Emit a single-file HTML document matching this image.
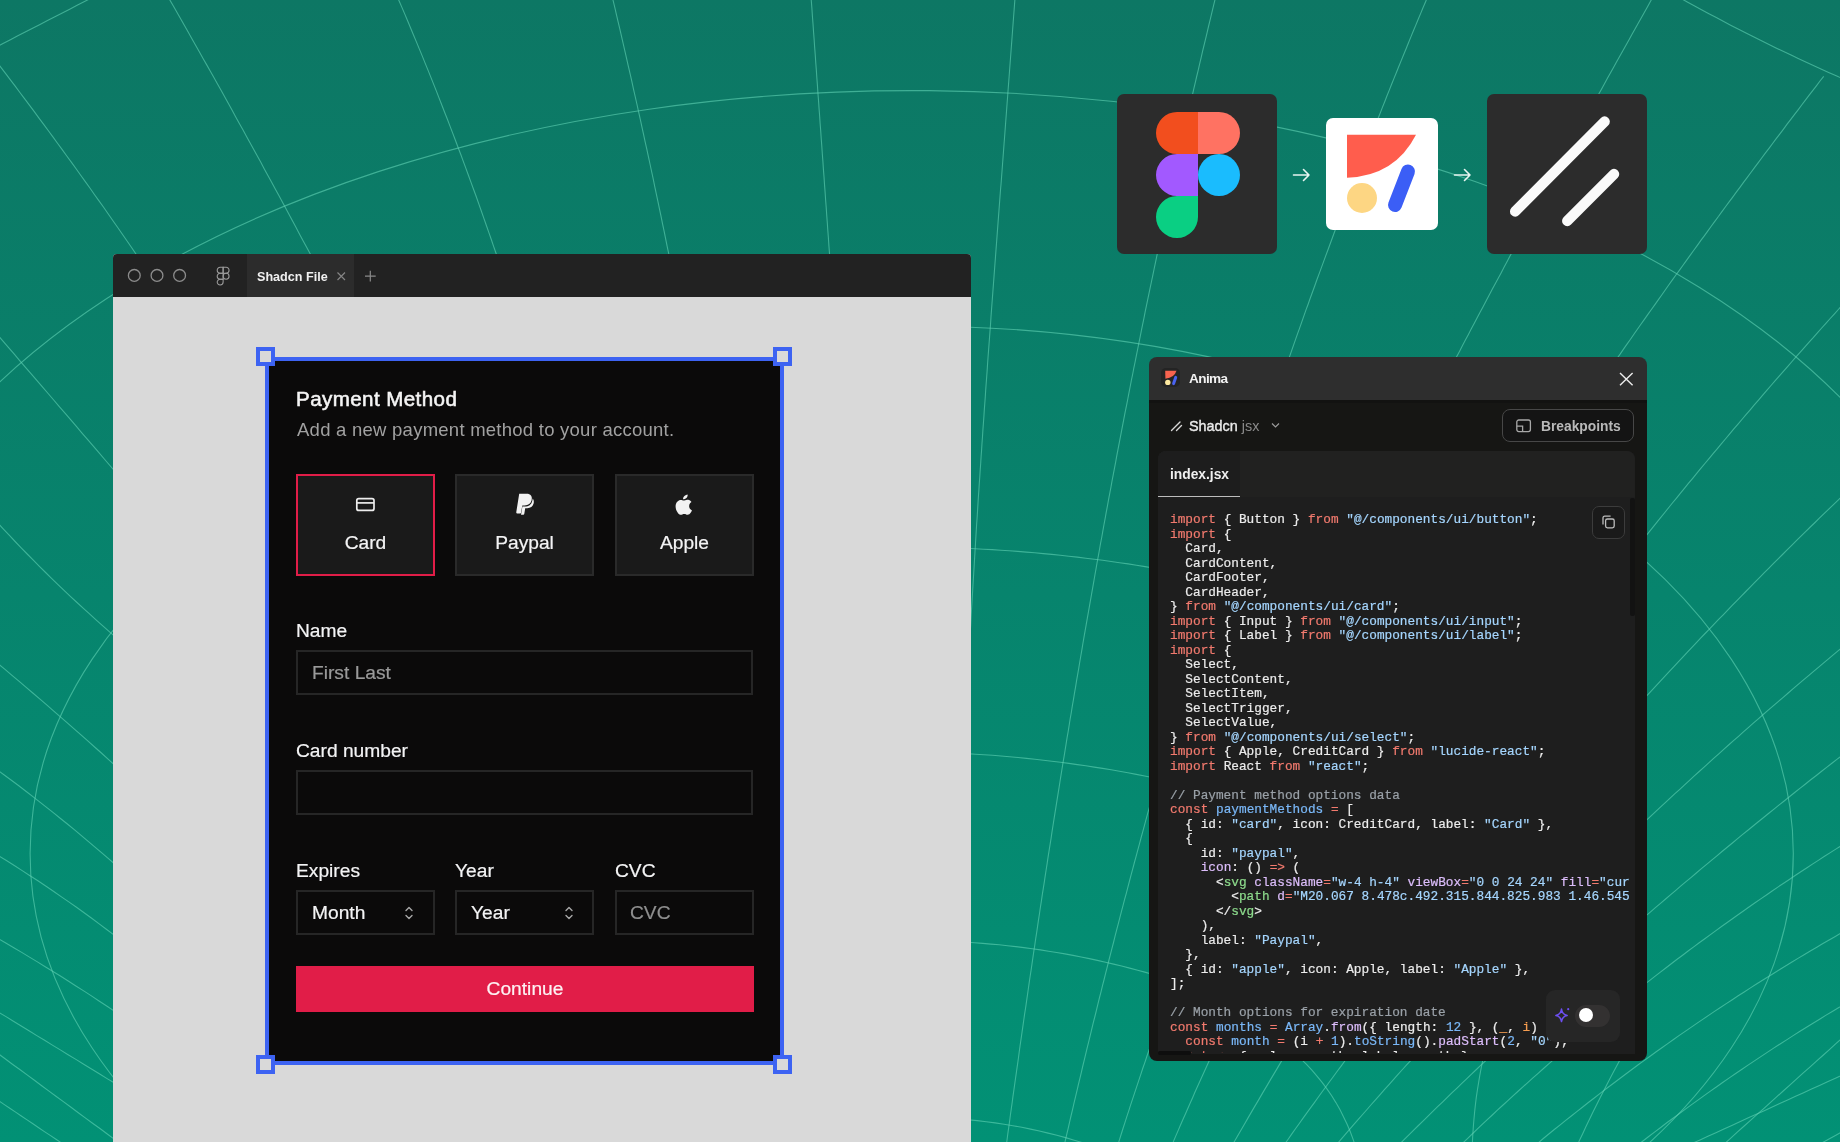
<!DOCTYPE html>
<html><head><meta charset="utf-8">
<style>
*{margin:0;padding:0;box-sizing:border-box}
html,body{width:1840px;height:1142px;overflow:hidden}
body{position:relative;-webkit-font-smoothing:antialiased;font-family:"Liberation Sans",sans-serif;background:linear-gradient(180deg,#0d7764 0%,#07846d 52%,#029175 100%)}
.abs{position:absolute;will-change:transform}
#grid{position:absolute;left:0;top:0}
/* browser */
#browser{left:113px;top:254px;width:858px;height:888px;background:#d9d9d9;border-radius:4px 4px 0 0;overflow:hidden}
#titlebar{left:0;top:0;width:858px;height:43px;background:#222222}
.dot{width:13px;height:13px;border:1.3px solid #8a8a8a;border-radius:50%;top:15px}
#tab{left:134px;top:0;width:107px;height:43px;background:#2c2c2c}
/* card */
#sel{left:265px;top:357px;width:519px;height:708px;border:4px solid #3d63f2;background:#0b0a0a}
.handle{width:19px;height:19px;border:4px solid #3d63f2;background:#d9d9d9}
.opt{width:139px;height:102px;background:#1a1a1a;border:2px solid #2a2a2a}
.opt.on{border-color:#e11d48}
.lbl{color:#f4f4f5;font-size:19.2px;white-space:nowrap;-webkit-text-stroke:0.2px currentColor}
.inp{width:457px;height:45px;border:2px solid #262626;background:#0b0a0a}
/* logos */
.lbox{width:160px;height:160px;background:#2c2c2c;border-radius:7px}
/* panel */
#panel{left:1149px;top:357px;width:498px;height:704px;background:#161614;border-radius:8px;overflow:hidden}
#phead{left:0;top:0;width:498px;height:43px;background:#2e2e2e;border-bottom:3px solid #121211;height:46px}
#code{font-family:"Liberation Mono",monospace;font-size:12.78px;line-height:14.5px;white-space:pre;color:#ececec;-webkit-text-stroke:0.2px currentColor}
.k{color:#f27a6e}.s{color:#a5d6ff}.c{color:#9aa1a8}.b{color:#7ab8f8}.p{color:#dcbdfb}.g{color:#8ddb8c}.o{color:#f69d50}
</style></head><body>

<svg id="grid" width="1840" height="1142" viewBox="0 0 1840 1142"><g fill="none" stroke="#62d3b6" stroke-opacity="0.6" stroke-width="1.1"><path d="M-26.7 58.7 L-19.3 54.9 L-11.9 51.1 L-4.4 47.3 L3.0 43.5 L10.4 39.7 L17.8 35.8 L25.2 32.0 L32.6 28.2 L40.0 24.4 L47.5 20.6 L54.9 16.8 L62.3 13.0 L69.7 9.2 L77.1 5.3 L84.5 1.5 L91.9 -2.3 L99.4 -6.1 L106.8 -9.9 L114.2 -13.7"/><path d="M-18.3 42.2 L-13.5 48.5 L-8.7 54.8 L-3.9 61.0 L0.9 67.3 L5.7 73.6 L10.4 79.9 L15.2 86.2 L19.9 92.5 L24.7 98.8 L29.4 105.1 L34.1 111.4 L38.8 117.8 L43.5 124.1 L48.2 130.5 L52.9 136.8 L57.5 143.2 L62.2 149.6 L66.8 156.0 L71.5 162.4 L76.1 168.8 L80.7 175.2 L85.3 181.6 L89.9 188.0 L94.4 194.5 L99.0 200.9 L103.6 207.3 L108.1 213.8 L112.6 220.3 L117.2 226.7 L121.7 233.2 L126.2 239.7 L130.7 246.2 L135.1 252.7 L139.6 259.2 L144.1 265.7 L148.5 272.2 L152.9 278.8"/><path d="M154.9 -25.9 L158.6 -19.5 L162.4 -13.0 L166.1 -6.6 L169.8 -0.1 L173.5 6.3 L177.2 12.8 L180.9 19.3 L184.6 25.8 L188.3 32.2 L191.9 38.7 L195.6 45.2 L199.3 51.7 L202.9 58.2 L206.6 64.6 L210.2 71.1 L213.9 77.6 L217.5 84.1 L221.2 90.6 L224.8 97.1 L228.4 103.6 L232.0 110.1 L235.6 116.7 L239.2 123.2 L242.9 129.7 L246.4 136.2 L250.0 142.7 L253.6 149.3 L257.2 155.8 L260.8 162.3 L264.3 168.9 L267.9 175.4 L271.5 181.9 L275.0 188.5 L278.6 195.0 L282.1 201.6 L285.6 208.1 L289.2 214.7 L292.7 221.3 L296.2 227.8 L299.7 234.4 L303.2 241.0 L306.8 247.5 L310.3 254.1 L313.7 260.7 L317.2 267.3 L320.7 273.8 L324.2 280.4"/><path d="M386.8 -27.5 L389.8 -20.6 L392.8 -13.7 L395.8 -6.8 L398.8 0.2 L401.8 7.1 L404.8 14.1 L407.7 21.0 L410.6 28.0 L413.5 35.0 L416.4 41.9 L419.3 48.9 L422.2 55.9 L425.0 62.9 L427.9 69.9 L430.7 76.9 L433.5 83.9 L436.3 90.9 L439.0 97.9 L441.8 105.0 L444.5 112.0 L447.3 119.0 L450.0 126.1 L452.7 133.1 L455.4 140.2 L458.0 147.2 L460.7 154.3 L463.3 161.4 L465.9 168.4 L468.5 175.5 L471.1 182.6 L473.7 189.7 L476.3 196.8 L478.8 203.9 L481.3 211.0 L483.8 218.1 L486.3 225.3 L488.8 232.4 L491.3 239.5 L493.7 246.7 L496.2 253.8 L498.6 261.0 L501.0 268.1 L503.4 275.3 L505.8 282.5"/><path d="M606.0 -29.2 L607.8 -21.8 L609.6 -14.4 L611.4 -6.9 L613.1 0.5 L614.9 7.9 L616.6 15.3 L618.3 22.7 L620.1 30.1 L621.8 37.6 L623.5 45.0 L625.2 52.4 L626.9 59.9 L628.6 67.3 L630.3 74.7 L632.0 82.1 L633.6 89.6 L635.3 97.0 L637.0 104.5 L638.6 111.9 L640.3 119.3 L641.9 126.8 L643.5 134.2 L645.1 141.7 L646.8 149.1 L648.4 156.6 L650.0 164.0 L651.6 171.5 L653.2 178.9 L654.7 186.4 L656.3 193.8 L657.9 201.3 L659.4 208.7 L661.0 216.2 L662.5 223.7 L664.1 231.1 L665.6 238.6 L667.1 246.1 L668.7 253.5 L670.2 261.0 L671.7 268.5 L673.2 275.9 L674.7 283.4"/><path d="M809.1 -29.9 L809.6 -22.3 L810.2 -14.6 L810.7 -7.0 L811.3 0.7 L811.9 8.4 L812.4 16.0 L813.0 23.7 L813.5 31.3 L814.1 39.0 L814.6 46.6 L815.2 54.3 L815.7 61.9 L816.3 69.6 L816.8 77.2 L817.4 84.9 L817.9 92.6 L818.5 100.2 L819.0 107.9 L819.6 115.5 L820.1 123.2 L820.7 130.8 L821.2 138.5 L821.8 146.1 L822.3 153.8 L822.9 161.4 L823.4 169.1 L824.0 176.8 L824.5 184.4 L825.1 192.1 L825.6 199.7 L826.2 207.4 L826.7 215.0 L827.3 222.7 L827.8 230.3 L828.4 238.0 L828.9 245.6 L829.5 253.3 L830.0 261.0 L830.5 268.6 L831.1 276.3 L831.6 283.9"/><path d="M1017.0 -29.9 L1016.5 -23.3 L1016.1 -16.6 L1015.6 -9.9 L1015.1 -3.3 L1014.6 3.4 L1014.1 10.1 L1013.6 16.7 L1013.1 23.4 L1012.6 30.0 L1012.1 36.7 L1011.6 43.4 L1011.1 50.0 L1010.6 56.7 L1010.1 63.4 L1009.6 70.0 L1009.1 76.7 L1008.6 83.4 L1008.1 90.0 L1007.6 96.7 L1007.1 103.3 L1006.6 110.0 L1006.1 116.7 L1005.6 123.3 L1005.1 130.0 L1004.6 136.7 L1004.1 143.3 L1003.6 150.0 L1003.1 156.6 L1002.6 163.3 L1002.1 170.0 L1001.6 176.6 L1001.1 183.3 L1000.5 190.0 L1000.0 196.6 L999.5 203.3 L999.0 210.0 L998.5 216.6 L998.0 223.3 L997.5 229.9 L997.0 236.6 L996.5 243.3 L996.0 249.9 L995.5 256.6 L995.0 263.3 L994.5 269.9 L994.0 276.6 L993.5 283.2 L993.0 289.9 L992.5 296.6 L992.0 303.2 L991.5 309.9 L991.0 316.6 L990.6 323.2 L990.1 329.9 L989.6 336.6 L989.1 343.2 L988.6 349.9 L988.1 356.5 L987.6 363.2 L987.2 369.9 L986.7 376.5 L986.2 383.2 L985.7 389.9 L985.3 396.5 L984.8 403.2 L984.3 409.9 L983.9 416.5 L983.4 423.2 L982.9 429.9 L982.5 436.5 L982.0 443.2 L981.6 449.9 L981.1 456.5 L980.7 463.2 L980.2 469.9 L979.8 476.5 L979.3 483.2 L978.9 489.9 L978.4 496.5 L978.0 503.2 L977.6 509.9 L977.2 516.5 L976.7 523.2 L976.3 529.9 L975.9 536.5 L975.5 543.2 L975.1 549.9 L974.7 556.6 L974.3 563.2 L973.9 569.9 L973.5 576.6 L973.1 583.2 L972.7 589.9 L972.3 596.6 L971.9 603.3 L971.5 609.9 L971.1 616.6 L970.8 623.3 L970.4 629.9 L970.0 636.6 L969.7 643.3 L969.3 650.0"/><path d="M1222.1 -29.2 L1220.6 -23.0 L1219.1 -16.8 L1217.5 -10.6 L1216.0 -4.4 L1214.5 1.7 L1213.0 7.9 L1211.5 14.1 L1210.0 20.3 L1208.5 26.5 L1207.1 32.7 L1205.6 38.9 L1204.1 45.0 L1202.6 51.2 L1201.2 57.4 L1199.7 63.6 L1198.3 69.8 L1196.8 76.0 L1195.4 82.2 L1193.9 88.4 L1192.5 94.6 L1191.1 100.8 L1189.6 107.0 L1188.2 113.2 L1186.8 119.4 L1185.4 125.6 L1184.0 131.8 L1182.6 138.0 L1181.2 144.2 L1179.8 150.4 L1178.4 156.6 L1177.0 162.8 L1175.6 169.1 L1174.3 175.3 L1172.9 181.5 L1171.5 187.7 L1170.2 193.9 L1168.8 200.1 L1167.5 206.3 L1166.1 212.5 L1164.8 218.8 L1163.4 225.0 L1162.1 231.2 L1160.8 237.4 L1159.4 243.6 L1158.1 249.9 L1156.8 256.1 L1155.5 262.3 L1154.2 268.5 L1152.9 274.8 L1151.6 281.0 L1150.3 287.2 L1149.0 293.4 L1147.7 299.7 L1146.4 305.9 L1145.1 312.1 L1143.9 318.4 L1142.6 324.6 L1141.3 330.8 L1140.1 337.1 L1138.8 343.3 L1137.6 349.5 L1136.3 355.8 L1135.1 362.0 L1133.8 368.2 L1132.6 374.5 L1131.3 380.7 L1130.1 387.0 L1128.9 393.2 L1127.7 399.5 L1126.5 405.7 L1125.2 411.9 L1124.0 418.2 L1122.8 424.4 L1121.6 430.7 L1120.4 436.9 L1119.2 443.2 L1118.0 449.4 L1116.8 455.7 L1115.7 461.9 L1114.5 468.2 L1113.3 474.4 L1112.1 480.7 L1111.0 486.9 L1109.8 493.2 L1108.6 499.4 L1107.5 505.7 L1106.3 511.9 L1105.2 518.2 L1104.0 524.5 L1102.9 530.7 L1101.8 537.0 L1100.6 543.2 L1099.5 549.5 L1098.4 555.7 L1097.2 562.0 L1096.1 568.3 L1095.0 574.5 L1093.9 580.8 L1092.8 587.1 L1091.7 593.3 L1090.6 599.6 L1089.5 605.8 L1088.4 612.1 L1087.3 618.4 L1086.2 624.6 L1085.1 630.9 L1084.0 637.2 L1082.9 643.5 L1081.9 649.7 L1080.8 656.0 L1079.7 662.3 L1078.7 668.5 L1077.6 674.8 L1076.5 681.1 L1075.5 687.4 L1074.4 693.6 L1073.4 699.9 L1072.3 706.2 L1071.3 712.5 L1070.2 718.7 L1069.2 725.0 L1068.2 731.3 L1067.1 737.6 L1066.1 743.8 L1065.1 750.1 L1064.1 756.4 L1063.0 762.7 L1062.0 769.0 L1061.0 775.2 L1060.0 781.5 L1059.0 787.8 L1058.0 794.1 L1057.0 800.4 L1056.0 806.6 L1055.0 812.9 L1054.0 819.2 L1053.0 825.5 L1052.0 831.8 L1051.1 838.1 L1050.1 844.4 L1049.1 850.6 L1048.1 856.9 L1047.2 863.2 L1046.2 869.5 L1045.2 875.8 L1044.3 882.1 L1043.3 888.4 L1042.3 894.7 L1041.4 900.9 L1040.4 907.2 L1039.5 913.5 L1038.5 919.8 L1037.6 926.1 L1036.7 932.4 L1035.7 938.7 L1034.8 945.0 L1033.8 951.3 L1032.9 957.6 L1032.0 963.9 L1031.1 970.2 L1030.1 976.5 L1029.2 982.7 L1028.3 989.0 L1027.4 995.3 L1026.5 1001.6 L1025.6 1007.9 L1024.6 1014.2 L1023.7 1020.5 L1022.8 1026.8 L1021.9 1033.1 L1021.0 1039.4 L1020.1 1045.7 L1019.2 1052.0 L1018.4 1058.3 L1017.5 1064.6 L1016.6 1070.9 L1015.7 1077.2 L1014.8 1083.5 L1013.9 1089.8 L1013.0 1096.1 L1012.2 1102.4 L1011.3 1108.7 L1010.4 1115.0 L1009.6 1121.3 L1008.7 1127.6 L1007.8 1133.9 L1007.0 1140.2 L1006.1 1146.5 L1005.2 1152.8 L1004.4 1159.1 L1003.5 1165.4 L1002.7 1171.7"/><path d="M1437.9 -27.6 L1435.4 -21.8 L1433.0 -15.9 L1430.5 -10.1 L1428.0 -4.2 L1425.6 1.7 L1423.1 7.5 L1420.7 13.4 L1418.2 19.3 L1415.8 25.1 L1413.3 31.0 L1410.9 36.9 L1408.5 42.8 L1406.1 48.7 L1403.7 54.5 L1401.3 60.4 L1398.9 66.3 L1396.5 72.2 L1394.1 78.1 L1391.7 84.0 L1389.4 89.9 L1387.0 95.8 L1384.7 101.7 L1382.3 107.6 L1380.0 113.6 L1377.6 119.5 L1375.3 125.4 L1373.0 131.3 L1370.7 137.2 L1368.3 143.1 L1366.0 149.1 L1363.7 155.0 L1361.4 160.9 L1359.2 166.9 L1356.9 172.8 L1354.6 178.7 L1352.3 184.7 L1350.1 190.6 L1347.8 196.6 L1345.6 202.5 L1343.3 208.5 L1341.1 214.4 L1338.8 220.4 L1336.6 226.3 L1334.4 232.3 L1332.2 238.2 L1330.0 244.2 L1327.8 250.2 L1325.6 256.1 L1323.4 262.1 L1321.2 268.1 L1319.0 274.1 L1316.8 280.0 L1314.7 286.0 L1312.5 292.0 L1310.3 298.0 L1308.2 304.0 L1306.0 309.9 L1303.9 315.9 L1301.8 321.9 L1299.7 327.9 L1297.5 333.9 L1295.4 339.9 L1293.3 345.9 L1291.2 351.9 L1289.1 357.9 L1287.0 363.9 L1284.9 369.9 L1282.9 375.9 L1280.8 381.9 L1278.7 388.0 L1276.6 394.0 L1274.6 400.0 L1272.5 406.0 L1270.5 412.0 L1268.5 418.1 L1266.4 424.1 L1264.4 430.1 L1262.4 436.1 L1260.4 442.2 L1258.3 448.2 L1256.3 454.2 L1254.3 460.3 L1252.3 466.3 L1250.4 472.4 L1248.4 478.4 L1246.4 484.5 L1244.4 490.5 L1242.5 496.5 L1240.5 502.6 L1238.5 508.6 L1236.6 514.7 L1234.6 520.8 L1232.7 526.8 L1230.8 532.9 L1228.9 538.9 L1226.9 545.0 L1225.0 551.1 L1223.1 557.1 L1221.2 563.2 L1219.3 569.3 L1217.4 575.3 L1215.5 581.4 L1213.6 587.5 L1211.8 593.6 L1209.9 599.7 L1208.0 605.7 L1206.2 611.8 L1204.3 617.9 L1202.5 624.0 L1200.6 630.1 L1198.8 636.2 L1196.9 642.3 L1195.1 648.3 L1193.3 654.4 L1191.5 660.5 L1189.6 666.6 L1187.8 672.7 L1186.0 678.8 L1184.2 684.9 L1182.5 691.0 L1180.7 697.1 L1178.9 703.2 L1177.1 709.4 L1175.3 715.5 L1173.6 721.6 L1171.8 727.7 L1170.1 733.8 L1168.3 739.9 L1166.6 746.0 L1164.8 752.2 L1163.1 758.3 L1161.4 764.4 L1159.6 770.5 L1157.9 776.6 L1156.2 782.8 L1154.5 788.9 L1152.8 795.0 L1151.1 801.2 L1149.4 807.3 L1147.7 813.4 L1146.0 819.6 L1144.4 825.7 L1142.7 831.8 L1141.0 838.0 L1139.4 844.1 L1137.7 850.3 L1136.1 856.4 L1134.4 862.5 L1132.8 868.7 L1131.1 874.8 L1129.5 881.0 L1127.9 887.1 L1126.3 893.3 L1124.6 899.4 L1123.0 905.6 L1121.4 911.7 L1119.8 917.9 L1118.2 924.1 L1116.6 930.2 L1115.0 936.4 L1113.5 942.5 L1111.9 948.7 L1110.3 954.9 L1108.7 961.0 L1107.2 967.2 L1105.6 973.3 L1104.1 979.5 L1102.5 985.7 L1101.0 991.9 L1099.4 998.0 L1097.9 1004.2 L1096.4 1010.4 L1094.9 1016.5 L1093.3 1022.7 L1091.8 1028.9 L1090.3 1035.1 L1088.8 1041.3 L1087.3 1047.4 L1085.8 1053.6 L1084.3 1059.8 L1082.8 1066.0 L1081.4 1072.2 L1079.9 1078.3 L1078.4 1084.5 L1077.0 1090.7 L1075.5 1096.9 L1074.0 1103.1 L1072.6 1109.3 L1071.1 1115.5 L1069.7 1121.7 L1068.3 1127.9 L1066.8 1134.1 L1065.4 1140.2 L1064.0 1146.4 L1062.5 1152.6 L1061.1 1158.8 L1059.7 1165.0 L1058.3 1171.2"/><path d="M1665.9 -26.0 L1662.8 -20.5 L1659.7 -15.0 L1656.6 -9.5 L1653.5 -4.0 L1650.4 1.5 L1647.4 7.0 L1644.3 12.5 L1641.2 18.0 L1638.1 23.5 L1635.0 29.0 L1631.9 34.5 L1628.9 40.0 L1625.8 45.5 L1622.7 51.0 L1619.6 56.6 L1616.5 62.1 L1613.5 67.6 L1610.4 73.1 L1607.3 78.6 L1604.2 84.2 L1601.2 89.7 L1598.1 95.2 L1595.0 100.7 L1592.0 106.3 L1588.9 111.8 L1585.8 117.3 L1582.8 122.9 L1579.7 128.4 L1576.7 133.9 L1573.6 139.5 L1570.6 145.0 L1567.5 150.5 L1564.5 156.1 L1561.4 161.6 L1558.4 167.2 L1555.3 172.7 L1552.3 178.3 L1549.3 183.8 L1546.2 189.4 L1543.2 194.9 L1540.2 200.5 L1537.1 206.0 L1534.1 211.6 L1531.1 217.2 L1528.1 222.7 L1525.1 228.3 L1522.1 233.9 L1519.0 239.4 L1516.0 245.0 L1513.0 250.6 L1510.0 256.1 L1507.0 261.7 L1504.0 267.3 L1501.1 272.9 L1498.1 278.5 L1495.1 284.0 L1492.1 289.6 L1489.1 295.2 L1486.2 300.8 L1483.2 306.4 L1480.2 312.0 L1477.3 317.6 L1474.3 323.2 L1471.3 328.8 L1468.4 334.4 L1465.4 340.0 L1462.5 345.6 L1459.6 351.2 L1456.6 356.8 L1453.7 362.4 L1450.8 368.0 L1447.8 373.7 L1444.9 379.3 L1442.0 384.9 L1439.1 390.5 L1436.2 396.1 L1433.3 401.8 L1430.4 407.4 L1427.5 413.0 L1424.6 418.7 L1421.7 424.3 L1418.8 430.0 L1416.0 435.6 L1413.1 441.2 L1410.2 446.9 L1407.4 452.5 L1404.5 458.2 L1401.7 463.8 L1398.8 469.5 L1396.0 475.2 L1393.1 480.8 L1390.3 486.5 L1387.5 492.2 L1384.7 497.8 L1381.9 503.5 L1379.1 509.2 L1376.3 514.9 L1373.5 520.5 L1370.7 526.2 L1367.9 531.9 L1365.1 537.6 L1362.3 543.3 L1359.6 549.0 L1356.8 554.7 L1354.0 560.4 L1351.3 566.1 L1348.6 571.8 L1345.8 577.5 L1343.1 583.2 L1340.4 588.9 L1337.6 594.6 L1334.9 600.3 L1332.2 606.1 L1329.5 611.8 L1326.8 617.5 L1324.1 623.2 L1321.5 629.0 L1318.8 634.7 L1316.1 640.5 L1313.4 646.2 L1310.8 651.9 L1308.1 657.7 L1305.5 663.4 L1302.9 669.2 L1300.2 674.9 L1297.6 680.7 L1295.0 686.5 L1292.4 692.2 L1289.8 698.0 L1287.2 703.8 L1284.6 709.6 L1282.1 715.3 L1279.5 721.1 L1276.9 726.9 L1274.4 732.7 L1271.8 738.5 L1269.3 744.3 L1266.8 750.1 L1264.2 755.9 L1261.7 761.7 L1259.2 767.5 L1256.7 773.3 L1254.2 779.1 L1251.7 784.9 L1249.2 790.7 L1246.8 796.6 L1244.3 802.4 L1241.9 808.2 L1239.4 814.1 L1237.0 819.9 L1234.6 825.7 L1232.1 831.6 L1229.7 837.4 L1227.3 843.3 L1224.9 849.1 L1222.5 855.0 L1220.2 860.8 L1217.8 866.7 L1215.4 872.6 L1213.1 878.4 L1210.8 884.3 L1208.4 890.2 L1206.1 896.1 L1203.8 902.0 L1201.5 907.9 L1199.2 913.8 L1196.9 919.7 L1194.6 925.6 L1192.3 931.5 L1190.1 937.4 L1187.8 943.3 L1185.6 949.2 L1183.4 955.1 L1181.1 961.0 L1178.9 967.0 L1176.7 972.9 L1174.5 978.8 L1172.4 984.8 L1170.2 990.7 L1168.0 996.7 L1165.9 1002.6 L1163.7 1008.6 L1161.6 1014.5 L1159.5 1020.5 L1157.4 1026.4 L1155.2 1032.4 L1153.2 1038.4 L1151.1 1044.4 L1149.0 1050.3 L1146.9 1056.3 L1144.9 1062.3 L1142.8 1068.3 L1140.8 1074.3 L1138.8 1080.3 L1136.8 1086.3 L1134.8 1092.3 L1132.8 1098.3 L1130.8 1104.4 L1128.9 1110.4 L1126.9 1116.4 L1125.0 1122.4 L1123.0 1128.5 L1121.1 1134.5 L1119.2 1140.6 L1117.3 1146.6 L1115.4 1152.6 L1113.5 1158.7 L1111.7 1164.8 L1109.8 1170.8"/><path d="M1823.7 76.3 L1820.0 81.0 L1816.4 85.8 L1812.7 90.6 L1809.0 95.4 L1805.4 100.2 L1801.7 105.0 L1798.1 109.8 L1794.4 114.6 L1790.8 119.4 L1787.1 124.2 L1783.5 129.1 L1779.9 133.9 L1776.2 138.7 L1772.6 143.5 L1769.0 148.3 L1765.3 153.2 L1761.7 158.0 L1758.1 162.8 L1754.5 167.7 L1750.9 172.5 L1747.3 177.4 L1743.7 182.2 L1740.1 187.1 L1736.5 191.9 L1732.9 196.8 L1729.3 201.7 L1725.7 206.5 L1722.1 211.4 L1718.6 216.3 L1715.0 221.1 L1711.4 226.0 L1707.9 230.9 L1704.3 235.8 L1700.7 240.7 L1697.2 245.6 L1693.6 250.5 L1690.1 255.4 L1686.5 260.3 L1683.0 265.2 L1679.5 270.1 L1675.9 275.0 L1672.4 279.9 L1668.9 284.8 L1665.4 289.8 L1661.9 294.7 L1658.4 299.6 L1654.9 304.6 L1651.4 309.5 L1647.9 314.4 L1644.4 319.4 L1640.9 324.3 L1637.4 329.3 L1633.9 334.2 L1630.5 339.2 L1627.0 344.1 L1623.5 349.1 L1620.1 354.1 L1616.6 359.0 L1613.2 364.0 L1609.7 369.0 L1606.3 374.0 L1602.8 379.0 L1599.4 383.9 L1596.0 388.9 L1592.6 393.9 L1589.2 398.9 L1585.7 403.9 L1582.3 408.9 L1578.9 414.0 L1575.5 419.0 L1572.2 424.0 L1568.8 429.0 L1565.4 434.0 L1562.0 439.1 L1558.7 444.1 L1555.3 449.1 L1551.9 454.2 L1548.6 459.2 L1545.2 464.2 L1541.9 469.3 L1538.6 474.3 L1535.2 479.4 L1531.9 484.5 L1528.6 489.5 L1525.3 494.6 L1522.0 499.7 L1518.7 504.7 L1515.4 509.8 L1512.1 514.9 L1508.8 520.0 L1505.5 525.1 L1502.2 530.2 L1499.0 535.3 L1495.7 540.4 L1492.4 545.5 L1489.2 550.6 L1486.0 555.7 L1482.7 560.8 L1479.5 565.9 L1476.3 571.0 L1473.0 576.2 L1469.8 581.3 L1466.6 586.4 L1463.4 591.6 L1460.2 596.7 L1457.0 601.8 L1453.8 607.0 L1450.7 612.1 L1447.5 617.3 L1444.3 622.5 L1441.2 627.6 L1438.0 632.8 L1434.9 638.0 L1431.8 643.1 L1428.6 648.3 L1425.5 653.5 L1422.4 658.7 L1419.3 663.9 L1416.2 669.1 L1413.1 674.3 L1410.0 679.5 L1406.9 684.7 L1403.8 689.9 L1400.8 695.1 L1397.7 700.3 L1394.6 705.5 L1391.6 710.8 L1388.5 716.0 L1385.5 721.2 L1382.5 726.5 L1379.5 731.7 L1376.4 736.9 L1373.4 742.2 L1370.4 747.4 L1367.5 752.7 L1364.5 758.0 L1361.5 763.2 L1358.5 768.5 L1355.6 773.8 L1352.6 779.0 L1349.7 784.3 L1346.7 789.6 L1343.8 794.9 L1340.9 800.2 L1337.9 805.5 L1335.0 810.8 L1332.1 816.1 L1329.2 821.4 L1326.3 826.7 L1323.5 832.0 L1320.6 837.3 L1317.7 842.7 L1314.9 848.0 L1312.0 853.3 L1309.2 858.7 L1306.4 864.0 L1303.5 869.4 L1300.7 874.7 L1297.9 880.1 L1295.1 885.4 L1292.3 890.8 L1289.5 896.1 L1286.8 901.5 L1284.0 906.9 L1281.2 912.3 L1278.5 917.7 L1275.7 923.0 L1273.0 928.4 L1270.3 933.8 L1267.6 939.2 L1264.9 944.6 L1262.2 950.0 L1259.5 955.4 L1256.8 960.9 L1254.1 966.3 L1251.4 971.7 L1248.8 977.1 L1246.1 982.6 L1243.5 988.0 L1240.9 993.5 L1238.2 998.9 L1235.6 1004.3 L1233.0 1009.8 L1230.4 1015.3 L1227.8 1020.7 L1225.3 1026.2 L1222.7 1031.7 L1220.1 1037.1 L1217.6 1042.6 L1215.0 1048.1 L1212.5 1053.6 L1210.0 1059.1 L1207.5 1064.6 L1205.0 1070.1 L1202.5 1075.6 L1200.0 1081.1 L1197.5 1086.6 L1195.0 1092.1 L1192.6 1097.7 L1190.1 1103.2 L1187.7 1108.7 L1185.3 1114.3 L1182.8 1119.8 L1180.4 1125.3 L1178.0 1130.9 L1175.6 1136.4 L1173.2 1142.0"/><path d="M1860.3 285.4 L1855.9 290.1 L1851.6 294.9 L1847.3 299.6 L1843.0 304.3 L1838.8 309.0 L1834.5 313.8 L1830.2 318.5 L1825.9 323.3 L1821.7 328.0 L1817.4 332.8 L1813.2 337.6 L1808.9 342.3 L1804.7 347.1 L1800.5 351.9 L1796.2 356.7 L1792.0 361.5 L1787.8 366.3 L1783.6 371.1 L1779.4 375.9 L1775.2 380.7 L1771.0 385.5 L1766.8 390.4 L1762.7 395.2 L1758.5 400.1 L1754.3 404.9 L1750.2 409.8 L1746.0 414.6 L1741.9 419.5 L1737.8 424.3 L1733.6 429.2 L1729.5 434.1 L1725.4 439.0 L1721.3 443.9 L1717.2 448.8 L1713.1 453.7 L1709.0 458.6 L1704.9 463.5 L1700.8 468.4 L1696.7 473.4 L1692.7 478.3 L1688.6 483.2 L1684.6 488.2 L1680.5 493.1 L1676.5 498.1 L1672.4 503.0 L1668.4 508.0 L1664.4 513.0 L1660.4 517.9 L1656.4 522.9 L1652.4 527.9 L1648.4 532.9 L1644.4 537.9 L1640.4 542.9 L1636.4 547.9 L1632.5 552.9 L1628.5 557.9 L1624.5 563.0 L1620.6 568.0 L1616.7 573.0 L1612.7 578.1 L1608.8 583.1 L1604.9 588.2 L1601.0 593.2 L1597.0 598.3 L1593.1 603.3 L1589.2 608.4 L1585.4 613.5 L1581.5 618.6 L1577.6 623.7 L1573.7 628.8 L1569.9 633.9 L1566.0 639.0 L1562.2 644.1 L1558.3 649.2 L1554.5 654.3 L1550.7 659.4 L1546.8 664.6 L1543.0 669.7 L1539.2 674.8 L1535.4 680.0 L1531.6 685.1 L1527.8 690.3 L1524.1 695.4 L1520.3 700.6 L1516.5 705.8 L1512.8 710.9 L1509.0 716.1 L1505.3 721.3 L1501.5 726.5 L1497.8 731.7 L1494.1 736.9 L1490.4 742.1 L1486.6 747.3 L1482.9 752.5 L1479.2 757.7 L1475.5 763.0 L1471.9 768.2 L1468.2 773.4 L1464.5 778.7 L1460.9 783.9 L1457.2 789.2 L1453.6 794.4 L1449.9 799.7 L1446.3 804.9 L1442.7 810.2 L1439.0 815.5 L1435.4 820.8 L1431.8 826.0 L1428.2 831.3 L1424.6 836.6 L1421.0 841.9 L1417.5 847.2 L1413.9 852.5 L1410.3 857.8 L1406.8 863.1 L1403.2 868.5 L1399.7 873.8 L1396.2 879.1 L1392.6 884.5 L1389.1 889.8 L1385.6 895.1 L1382.1 900.5 L1378.6 905.8 L1375.1 911.2 L1371.6 916.6 L1368.1 921.9 L1364.7 927.3 L1361.2 932.7 L1357.8 938.1 L1354.3 943.5 L1350.9 948.8 L1347.4 954.2 L1344.0 959.6 L1340.6 965.0 L1337.2 970.4 L1333.8 975.9 L1330.4 981.3 L1327.0 986.7 L1323.6 992.1 L1320.2 997.6 L1316.9 1003.0 L1313.5 1008.4 L1310.2 1013.9 L1306.8 1019.3 L1303.5 1024.8 L1300.2 1030.2 L1296.8 1035.7 L1293.5 1041.2 L1290.2 1046.6 L1286.9 1052.1 L1283.6 1057.6 L1280.3 1063.1 L1277.1 1068.6 L1273.8 1074.1 L1270.5 1079.6 L1267.3 1085.1 L1264.0 1090.6 L1260.8 1096.1 L1257.6 1101.6 L1254.3 1107.1 L1251.1 1112.6 L1247.9 1118.1 L1244.7 1123.7 L1241.5 1129.2 L1238.3 1134.8 L1235.1 1140.3 L1232.0 1145.8 L1228.8 1151.4 L1225.7 1157.0 L1222.5 1162.5 L1219.4 1168.1"/><path d="M1861.9 477.3 L1857.2 481.8 L1852.5 486.3 L1847.8 490.8 L1843.1 495.3 L1838.4 499.8 L1833.7 504.3 L1829.0 508.9 L1824.3 513.4 L1819.6 517.9 L1815.0 522.5 L1810.3 527.0 L1805.6 531.6 L1801.0 536.2 L1796.4 540.7 L1791.7 545.3 L1787.1 549.9 L1782.5 554.5 L1777.9 559.1 L1773.3 563.7 L1768.7 568.3 L1764.1 572.9 L1759.5 577.6 L1755.0 582.2 L1750.4 586.8 L1745.8 591.5 L1741.3 596.1 L1736.7 600.8 L1732.2 605.4 L1727.7 610.1 L1723.2 614.8 L1718.6 619.4 L1714.1 624.1 L1709.6 628.8 L1705.1 633.5 L1700.6 638.2 L1696.2 642.9 L1691.7 647.6 L1687.2 652.4 L1682.8 657.1 L1678.3 661.8 L1673.9 666.6 L1669.4 671.3 L1665.0 676.1 L1660.6 680.8 L1656.2 685.6 L1651.8 690.4 L1647.4 695.1 L1643.0 699.9 L1638.6 704.7 L1634.2 709.5 L1629.8 714.3 L1625.4 719.1 L1621.1 723.9 L1616.7 728.7 L1612.4 733.6 L1608.1 738.4 L1603.7 743.2 L1599.4 748.1 L1595.1 752.9 L1590.8 757.8 L1586.5 762.7 L1582.2 767.5 L1577.9 772.4 L1573.6 777.3 L1569.3 782.2 L1565.1 787.1 L1560.8 792.0 L1556.5 796.9 L1552.3 801.8 L1548.1 806.7 L1543.8 811.6 L1539.6 816.6 L1535.4 821.5 L1531.2 826.4 L1527.0 831.4 L1522.8 836.3 L1518.6 841.3 L1514.4 846.3 L1510.2 851.3 L1506.1 856.2 L1501.9 861.2 L1497.7 866.2 L1493.6 871.2 L1489.5 876.2 L1485.3 881.2 L1481.2 886.2 L1477.1 891.3 L1473.0 896.3 L1468.9 901.3 L1464.8 906.4 L1460.7 911.4 L1456.6 916.5 L1452.5 921.5 L1448.5 926.6 L1444.4 931.7 L1440.3 936.8 L1436.3 941.9 L1432.3 946.9 L1428.2 952.0 L1424.2 957.1 L1420.2 962.3 L1416.2 967.4 L1412.2 972.5 L1408.2 977.6 L1404.2 982.8 L1400.2 987.9 L1396.2 993.0 L1392.2 998.2 L1388.3 1003.4 L1384.3 1008.5 L1380.4 1013.7 L1376.4 1018.9 L1372.5 1024.1 L1368.6 1029.3 L1364.7 1034.4 L1360.7 1039.7 L1356.8 1044.9 L1352.9 1050.1 L1349.1 1055.3 L1345.2 1060.5 L1341.3 1065.8 L1337.4 1071.0 L1333.6 1076.2 L1329.7 1081.5 L1325.9 1086.8 L1322.0 1092.0 L1318.2 1097.3 L1314.4 1102.6 L1310.5 1107.9 L1306.7 1113.1 L1302.9 1118.4 L1299.1 1123.7 L1295.3 1129.0 L1291.5 1134.4 L1287.8 1139.7 L1284.0 1145.0 L1280.2 1150.3 L1276.5 1155.7 L1272.7 1161.0 L1269.0 1166.4"/><path d="M1864.1 629.3 L1859.0 633.5 L1853.9 637.7 L1848.8 641.9 L1843.7 646.1 L1838.6 650.4 L1833.5 654.6 L1828.5 658.8 L1823.4 663.1 L1818.4 667.3 L1813.3 671.6 L1808.3 675.8 L1803.2 680.1 L1798.2 684.4 L1793.2 688.7 L1788.2 693.0 L1783.2 697.3 L1778.2 701.6 L1773.2 705.9 L1768.2 710.2 L1763.2 714.5 L1758.3 718.9 L1753.3 723.2 L1748.3 727.6 L1743.4 731.9 L1738.5 736.3 L1733.5 740.7 L1728.6 745.0 L1723.7 749.4 L1718.8 753.8 L1713.9 758.2 L1709.0 762.6 L1704.1 767.1 L1699.2 771.5 L1694.3 775.9 L1689.5 780.4 L1684.6 784.8 L1679.8 789.3 L1674.9 793.7 L1670.1 798.2 L1665.3 802.7 L1660.4 807.1 L1655.6 811.6 L1650.8 816.1 L1646.0 820.6 L1641.2 825.2 L1636.4 829.7 L1631.7 834.2 L1626.9 838.7 L1622.1 843.3 L1617.4 847.8 L1612.6 852.4 L1607.9 857.0 L1603.1 861.5 L1598.4 866.1 L1593.7 870.7 L1589.0 875.3 L1584.3 879.9 L1579.6 884.5 L1574.9 889.1 L1570.2 893.7 L1565.5 898.4 L1560.9 903.0 L1556.2 907.7 L1551.5 912.3 L1546.9 917.0 L1542.3 921.7 L1537.6 926.3 L1533.0 931.0 L1528.4 935.7 L1523.8 940.4 L1519.2 945.1 L1514.6 949.8 L1510.0 954.5 L1505.4 959.3 L1500.8 964.0 L1496.3 968.7 L1491.7 973.5 L1487.1 978.3 L1482.6 983.0 L1478.1 987.8 L1473.5 992.6 L1469.0 997.4 L1464.5 1002.1 L1460.0 1007.0 L1455.5 1011.8 L1451.0 1016.6 L1446.5 1021.4 L1442.0 1026.2 L1437.5 1031.1 L1433.1 1035.9 L1428.6 1040.8 L1424.2 1045.6 L1419.7 1050.5 L1415.3 1055.4 L1410.9 1060.3 L1406.4 1065.1 L1402.0 1070.0 L1397.6 1074.9 L1393.2 1079.9 L1388.8 1084.8 L1384.4 1089.7 L1380.1 1094.6 L1375.7 1099.6 L1371.3 1104.5 L1367.0 1109.5 L1362.6 1114.5 L1358.3 1119.4 L1353.9 1124.4 L1349.6 1129.4 L1345.3 1134.4 L1341.0 1139.4 L1336.7 1144.4 L1332.4 1149.4 L1328.1 1154.4 L1323.8 1159.5 L1319.5 1164.5"/><path d="M1863.8 738.6 L1858.4 742.7 L1853.1 746.8 L1847.8 750.9 L1842.5 755.0 L1837.2 759.1 L1831.9 763.2 L1826.6 767.4 L1821.3 771.5 L1816.0 775.7 L1810.7 779.8 L1805.5 784.0 L1800.2 788.1 L1795.0 792.3 L1789.7 796.5 L1784.5 800.7 L1779.2 804.9 L1774.0 809.1 L1768.8 813.3 L1763.6 817.5 L1758.3 821.7 L1753.1 826.0 L1747.9 830.2 L1742.7 834.4 L1737.6 838.7 L1732.4 843.0 L1727.2 847.2 L1722.0 851.5 L1716.9 855.8 L1711.7 860.1 L1706.6 864.4 L1701.4 868.7 L1696.3 873.0 L1691.2 877.3 L1686.0 881.6 L1680.9 885.9 L1675.8 890.3 L1670.7 894.6 L1665.6 899.0 L1660.5 903.3 L1655.4 907.7 L1650.3 912.1 L1645.2 916.4 L1640.2 920.8 L1635.1 925.2 L1630.1 929.6 L1625.0 934.0 L1620.0 938.4 L1614.9 942.9 L1609.9 947.3 L1604.9 951.7 L1599.8 956.2 L1594.8 960.6 L1589.8 965.1 L1584.8 969.5 L1579.8 974.0 L1574.8 978.5 L1569.9 983.0 L1564.9 987.5 L1559.9 992.0 L1554.9 996.5 L1550.0 1001.0 L1545.0 1005.5 L1540.1 1010.0 L1535.1 1014.6 L1530.2 1019.1 L1525.3 1023.7 L1520.4 1028.2 L1515.4 1032.8 L1510.5 1037.3 L1505.6 1041.9 L1500.7 1046.5 L1495.8 1051.1 L1491.0 1055.7 L1486.1 1060.3 L1481.2 1064.9 L1476.4 1069.5 L1471.5 1074.2 L1466.6 1078.8 L1461.8 1083.4 L1457.0 1088.1 L1452.1 1092.7 L1447.3 1097.4 L1442.5 1102.1 L1437.6 1106.7 L1432.8 1111.4 L1428.0 1116.1 L1423.2 1120.8 L1418.4 1125.5 L1413.7 1130.2 L1408.9 1134.9 L1404.1 1139.7 L1399.3 1144.4 L1394.6 1149.1 L1389.8 1153.9 L1385.1 1158.6 L1380.3 1163.4"/><path d="M1865.6 830.5 L1859.7 834.1 L1853.8 837.8 L1847.9 841.5 L1842.0 845.2 L1836.2 848.9 L1830.3 852.6 L1824.5 856.3 L1818.7 860.1 L1812.8 863.9 L1807.0 867.7 L1801.2 871.5 L1795.5 875.3 L1789.7 879.2 L1784.0 883.0 L1778.2 886.9 L1772.5 890.8 L1766.8 894.7 L1761.1 898.6 L1755.4 902.5 L1749.7 906.5 L1744.1 910.5 L1738.4 914.5 L1732.8 918.5 L1727.2 922.5 L1721.5 926.5 L1715.9 930.6 L1710.4 934.6 L1704.8 938.7 L1699.2 942.8 L1693.7 946.9 L1688.1 951.0 L1682.6 955.2 L1677.1 959.3 L1671.6 963.5 L1666.1 967.7 L1660.7 971.9 L1655.2 976.1 L1649.8 980.4 L1644.3 984.6 L1638.9 988.9 L1633.5 993.2 L1628.1 997.5 L1622.7 1001.8 L1617.4 1006.1 L1612.0 1010.5 L1606.7 1014.9 L1601.3 1019.2 L1596.0 1023.6 L1590.7 1028.1 L1585.4 1032.5 L1580.1 1036.9 L1574.9 1041.4 L1569.6 1045.9 L1564.4 1050.4 L1559.1 1054.9 L1553.9 1059.4 L1548.7 1063.9 L1543.5 1068.5 L1538.4 1073.1 L1533.2 1077.7 L1528.0 1082.3 L1522.9 1086.9 L1517.8 1091.5 L1512.7 1096.2 L1507.6 1100.9 L1502.5 1105.5 L1497.4 1110.2 L1492.3 1115.0 L1487.3 1119.7 L1482.2 1124.4 L1477.2 1129.2 L1472.2 1134.0 L1467.2 1138.8 L1462.2 1143.6 L1457.2 1148.4 L1452.3 1153.3 L1447.3 1158.1 L1442.4 1163.0"/><path d="M1866.3 918.9 L1860.1 922.3 L1853.8 925.8 L1847.6 929.3 L1841.4 932.9 L1835.3 936.4 L1829.1 940.0 L1822.9 943.6 L1816.8 947.2 L1810.7 950.8 L1804.5 954.5 L1798.4 958.1 L1792.4 961.8 L1786.3 965.5 L1780.2 969.2 L1774.2 973.0 L1768.2 976.7 L1762.1 980.5 L1756.1 984.3 L1750.1 988.1 L1744.2 992.0 L1738.2 995.8 L1732.3 999.7 L1726.3 1003.6 L1720.4 1007.5 L1714.5 1011.4 L1708.6 1015.4 L1702.7 1019.4 L1696.8 1023.4 L1691.0 1027.4 L1685.2 1031.4 L1679.3 1035.4 L1673.5 1039.5 L1667.7 1043.6 L1661.9 1047.7 L1656.2 1051.8 L1650.4 1056.0 L1644.7 1060.1 L1638.9 1064.3 L1633.2 1068.5 L1627.5 1072.7 L1621.8 1077.0 L1616.2 1081.2 L1610.5 1085.5 L1604.8 1089.8 L1599.2 1094.1 L1593.6 1098.5 L1588.0 1102.8 L1582.4 1107.2 L1576.8 1111.6 L1571.3 1116.0 L1565.7 1120.4 L1560.2 1124.9 L1554.6 1129.3 L1549.1 1133.8 L1543.6 1138.3 L1538.2 1142.9 L1532.7 1147.4 L1527.2 1152.0 L1521.8 1156.5 L1516.4 1161.2"/><path d="M1865.9 991.6 L1859.2 995.5 L1852.6 999.4 L1846.0 1003.3 L1839.3 1007.2 L1832.7 1011.2 L1826.1 1015.1 L1819.6 1019.2 L1813.0 1023.2 L1806.5 1027.2 L1800.0 1031.3 L1793.5 1035.4 L1787.0 1039.6 L1780.5 1043.7 L1774.0 1047.9 L1767.6 1052.1 L1761.2 1056.4 L1754.8 1060.6 L1748.4 1064.9 L1742.0 1069.2 L1735.7 1073.5 L1729.3 1077.9 L1723.0 1082.3 L1716.7 1086.7 L1710.4 1091.1 L1704.1 1095.6 L1697.9 1100.1 L1691.6 1104.6 L1685.4 1109.1 L1679.2 1113.7 L1673.0 1118.2 L1666.8 1122.8 L1660.7 1127.5 L1654.5 1132.1 L1648.4 1136.8 L1642.3 1141.5 L1636.2 1146.3 L1630.2 1151.0 L1624.1 1155.8 L1618.0 1160.6"/><path d="M1867.3 1063.7 L1859.3 1067.3 L1851.4 1070.9 L1843.4 1074.6 L1835.4 1078.2 L1827.5 1081.8 L1819.5 1085.4 L1811.5 1089.1 L1803.6 1092.7 L1795.6 1096.3 L1787.6 1100.0 L1779.7 1103.6 L1771.7 1107.2 L1763.7 1110.9 L1755.7 1114.5 L1747.8 1118.1 L1739.8 1121.8 L1731.8 1125.4 L1723.9 1129.0 L1715.9 1132.7 L1707.9 1136.3 L1700.0 1139.9 L1692.0 1143.5 L1684.0 1147.2 L1676.1 1150.8 L1668.1 1154.4"/><path d="M1866.3 1118.6 L1862.7 1120.6 L1859.1 1122.6 L1855.4 1124.6 L1851.8 1126.6 L1848.1 1128.6 L1844.5 1130.5 L1840.9 1132.5 L1837.2 1134.5 L1833.6 1136.5 L1829.9 1138.5 L1826.3 1140.5 L1822.6 1142.5 L1819.0 1144.5 L1815.4 1146.4 L1811.7 1148.4 L1808.1 1150.4 L1804.4 1152.4 L1800.8 1154.4 L1797.2 1156.4"/><path d="M1862.3 1020.0 L1855.7 1025.9 L1849.1 1031.8 L1842.5 1037.7 L1835.9 1043.6 L1829.4 1049.6 L1822.8 1055.5 L1816.2 1061.4 L1809.6 1067.3 L1803.0 1073.2 L1796.4 1079.2 L1789.8 1085.1 L1783.2 1091.0 L1776.6 1096.9 L1770.0 1102.8 L1763.4 1108.8 L1756.8 1114.7 L1750.2 1120.6 L1743.6 1126.5 L1737.0 1132.4 L1730.5 1138.4 L1723.9 1144.3 L1717.3 1150.2 L1710.7 1156.1 L1704.1 1162.0"/><path d="M1657.6 -14.7 L1664.9 -10.6 L1672.2 -6.5 L1679.5 -2.4 L1686.8 1.7 L1694.2 5.7 L1701.5 9.7 L1708.9 13.7 L1716.3 17.6 L1723.7 21.5 L1731.1 25.4 L1738.6 29.2 L1746.0 33.0 L1753.5 36.8 L1761.0 40.5 L1768.5 44.2 L1776.0 47.9 L1783.6 51.5 L1791.1 55.1 L1798.7 58.7 L1806.3 62.2 L1813.9 65.7 L1821.5 69.2 L1829.2 72.7 L1836.8 76.1 L1844.5 79.5 L1852.2 82.8 L1859.9 86.1 L1867.6 89.4"/><path d="M-19.6 315.0 L-14.0 321.5 L-8.3 328.1 L-2.7 334.6 L3.0 341.1 L8.6 347.7 L14.3 354.2 L19.9 360.8 L25.5 367.3 L31.2 373.8 L36.8 380.4 L42.4 386.9 L48.1 393.5 L53.7 400.0 L59.3 406.6 L65.0 413.1 L70.6 419.7 L76.2 426.2 L81.8 432.8 L87.5 439.3 L93.1 445.9 L98.7 452.4 L104.3 459.0 L109.9 465.5 L115.6 472.1 L121.2 478.7 L126.8 485.2 L132.4 491.8"/><path d="M-20.2 503.1 L-14.4 509.6 L-8.5 516.1 L-2.7 522.5 L3.2 528.9 L9.2 535.2 L15.1 541.5 L21.2 547.8 L27.2 554.0 L33.3 560.2 L39.4 566.4 L45.6 572.5 L51.8 578.6 L58.0 584.6 L64.3 590.6 L70.6 596.6 L77.0 602.5 L83.4 608.4 L89.8 614.2 L96.3 620.1 L102.8 625.8 L109.3 631.6 L115.9 637.3 L122.5 642.9 L129.2 648.6 L135.8 654.2"/><path d="M-23.2 646.2 L-16.1 652.0 L-9.1 657.8 L-2.0 663.6 L5.0 669.4 L12.0 675.3 L18.9 681.2 L25.9 687.1 L32.8 693.0 L39.7 698.9 L46.7 704.8 L53.5 710.8 L60.4 716.8 L67.3 722.8 L74.1 728.8 L81.0 734.8 L87.8 740.9 L94.6 747.0 L101.4 753.0 L108.1 759.2 L114.9 765.3 L121.6 771.4 L128.3 777.6 L135.0 783.8"/><path d="M-24.3 754.4 L-17.0 759.5 L-9.8 764.7 L-2.6 769.9 L4.6 775.2 L11.7 780.5 L18.8 785.8 L25.9 791.2 L32.9 796.6 L39.9 802.1 L46.9 807.6 L53.9 813.1 L60.8 818.7 L67.7 824.3 L74.6 829.9 L81.4 835.6 L88.2 841.3 L95.0 847.1 L101.8 852.9 L108.5 858.7 L115.2 864.5 L121.8 870.5 L128.5 876.4 L135.1 882.4"/><path d="M-25.7 841.1 L-17.6 845.9 L-9.6 850.7 L-1.6 855.6 L6.4 860.5 L14.3 865.5 L22.2 870.6 L30.0 875.7 L37.9 880.8 L45.7 886.0 L53.4 891.3 L61.1 896.6 L68.8 901.9 L76.5 907.3 L84.1 912.8 L91.7 918.3 L99.2 923.9 L106.7 929.5 L114.2 935.1 L121.7 940.9 L129.1 946.6 L136.4 952.5"/><path d="M-26.1 924.9 L-18.1 929.4 L-10.1 933.9 L-2.1 938.5 L5.8 943.1 L13.8 947.7 L21.7 952.4 L29.5 957.1 L37.4 961.9 L45.2 966.7 L53.0 971.5 L60.8 976.3 L68.6 981.2 L76.3 986.2 L84.1 991.1 L91.8 996.1 L99.4 1001.2 L107.1 1006.3 L114.7 1011.4 L122.3 1016.5 L129.9 1021.7 L137.5 1026.9"/><path d="M-25.6 997.3 L-17.8 1002.1 L-10.0 1006.9 L-2.2 1011.7 L5.6 1016.4 L13.4 1021.2 L21.2 1026.0 L29.0 1030.8 L36.8 1035.6 L44.6 1040.3 L52.4 1045.1 L60.3 1049.9 L68.1 1054.7 L75.9 1059.4 L83.7 1064.2 L91.5 1069.0 L99.3 1073.8 L107.1 1078.6 L114.9 1083.3 L122.7 1088.1 L130.5 1092.9 L138.3 1097.7"/><path d="M-24.2 1037.2 L-16.8 1042.6 L-9.5 1048.0 L-2.2 1053.4 L5.1 1058.8 L12.4 1064.2 L19.8 1069.5 L27.1 1074.9 L34.4 1080.3 L41.7 1085.7 L49.0 1091.1 L56.3 1096.5 L63.7 1101.9 L71.0 1107.3 L78.3 1112.7 L85.6 1118.1 L92.9 1123.5 L100.3 1128.8 L107.6 1134.2 L114.9 1139.6 L122.2 1145.0 L129.5 1150.4 L136.9 1155.8"/><path d="M-24.9 1085.0 L-19.1 1088.9 L-13.3 1092.7 L-7.6 1096.6 L-1.8 1100.5 L4.0 1104.4 L9.8 1108.3 L15.6 1112.1 L21.3 1116.0 L27.1 1119.9 L32.9 1123.8 L38.7 1127.7 L44.4 1131.6 L50.2 1135.4 L56.0 1139.3 L61.8 1143.2 L67.6 1147.1 L73.3 1151.0 L79.1 1154.8 L84.9 1158.7"/><path d="M940.8 547.4 L949.4 547.7 L958.0 548.0 L966.5 548.3 L975.1 548.7 L983.6 549.2 L992.2 549.6 L1000.7 550.2 L1009.2 550.8 L1017.8 551.4 L1026.3 552.1 L1034.8 552.8 L1043.3 553.6 L1051.8 554.4 L1060.3 555.3 L1068.8 556.2 L1077.3 557.1 L1085.8 558.2 L1094.2 559.2 L1102.7 560.3 L1111.2 561.5 L1119.6 562.7 L1128.1 563.9 L1136.5 565.2 L1145.0 566.6 L1153.4 568.0 L1161.9 569.4 L1170.3 570.9 L1178.7 572.4"/><path d="M941.2 752.5 L949.7 752.8 L958.3 753.2 L966.8 753.6 L975.4 754.2 L983.9 754.7 L992.4 755.3 L1001.0 756.0 L1009.5 756.7 L1018.0 757.5 L1026.5 758.4 L1035.0 759.3 L1043.4 760.2 L1051.9 761.2 L1060.4 762.3 L1068.9 763.4 L1077.3 764.6 L1085.8 765.8 L1094.2 767.1 L1102.6 768.4 L1111.1 769.8 L1119.5 771.3 L1127.9 772.8 L1136.3 774.4 L1144.7 776.0 L1153.1 777.7 L1161.5 779.4 L1169.9 781.2 L1178.2 783.0"/><path d="M941.1 941.1 L949.4 941.4 L957.7 941.8 L966.1 942.2 L974.4 942.7 L982.7 943.4 L990.9 944.1 L999.2 944.8 L1007.5 945.7 L1015.7 946.6 L1023.9 947.6 L1032.2 948.7 L1040.4 949.9 L1048.5 951.2 L1056.7 952.5 L1064.9 953.9 L1073.0 955.4 L1081.2 957.0 L1089.3 958.6 L1097.4 960.4 L1105.5 962.2 L1113.6 964.1 L1121.6 966.0 L1129.7 968.1 L1137.7 970.2 L1145.7 972.4 L1153.7 974.7 L1161.7 977.1 L1169.7 979.6 L1177.7 982.1"/><path d="M941.0 1118.0 L950.1 1118.4 L959.2 1119.0 L968.2 1119.8 L977.2 1120.6 L986.2 1121.7 L995.1 1122.9 L1004.0 1124.2 L1012.9 1125.7 L1021.8 1127.3 L1030.6 1129.1 L1039.4 1131.0 L1048.1 1133.1 L1056.9 1135.3 L1065.6 1137.6 L1074.2 1140.2 L1082.9 1142.8 L1091.5 1145.6 L1100.1 1148.6 L1108.6 1151.7"/><path d="M1281.1 1042.2 L1287.8 1047.4 L1294.2 1052.8 L1300.4 1058.4 L1306.3 1064.2 L1311.9 1070.1 L1317.2 1076.3 L1322.3 1082.6 L1327.1 1089.1 L1331.7 1095.8 L1335.9 1102.6 L1339.9 1109.6 L1343.6 1116.9 L1347.1 1124.3 L1350.3 1131.8 L1353.2 1139.6 L1355.8 1147.5 L1358.2 1155.6 L1360.3 1163.9 L1362.1 1172.4"/><path d="M1489.9 1031.4 L1487.9 1038.7 L1486.1 1046.0 L1484.3 1053.3 L1482.7 1060.6 L1481.2 1067.9 L1479.8 1075.3 L1478.6 1082.7 L1477.4 1090.0 L1476.3 1097.4 L1475.4 1104.8 L1474.6 1112.3 L1473.9 1119.7 L1473.3 1127.2 L1472.8 1134.6 L1472.4 1142.1 L1472.1 1149.6 L1472.0 1157.1 L1471.9 1164.6 L1472.0 1172.2"/><path d="M1633.6 1035.5 L1629.7 1042.3 L1625.9 1049.2 L1622.0 1056.1 L1618.3 1063.1 L1614.5 1070.0 L1610.8 1077.0 L1607.2 1084.0 L1603.6 1091.0 L1600.0 1098.0 L1596.5 1105.0 L1593.0 1112.1 L1589.5 1119.2 L1586.1 1126.3 L1582.8 1133.4 L1579.4 1140.6 L1576.2 1147.8 L1572.9 1155.0 L1569.7 1162.2 L1566.6 1169.4"/><path d="M-20 401.3 A1064.7 601.6 0 0 1 1860 418.4"/><ellipse cx="911.7" cy="853.6" rx="881.6" ry="527.6"/></g></svg>

<!-- Browser window -->
<div id="browser" class="abs">
  <div id="titlebar" class="abs">
    <div id="tab" class="abs"></div>
  </div>
</div>
<svg class="abs" style="left:113px;top:254px" width="300" height="43" viewBox="113 254 300 43">
  <circle cx="134.3" cy="275.4" r="5.9" fill="none" stroke="#8c8c8c" stroke-width="1.3"/>
  <circle cx="157" cy="275.4" r="5.9" fill="none" stroke="#8c8c8c" stroke-width="1.3"/>
  <circle cx="179.6" cy="275.4" r="5.9" fill="none" stroke="#8c8c8c" stroke-width="1.3"/>
  <g transform="translate(217.2 267.3) scale(0.312)" fill="none" stroke="#9c9c9c" stroke-width="3.4">
    <path d="M19 28.5a9.5 9.5 0 1 1 19 0 9.5 9.5 0 0 1-19 0z"/>
    <path d="M0 47.5A9.5 9.5 0 0 1 9.5 38H19v9.5a9.5 9.5 0 1 1-19 0z"/>
    <path d="M19 0v19h9.5a9.5 9.5 0 1 0 0-19H19z"/>
    <path d="M0 9.5A9.5 9.5 0 0 0 9.5 19H19V0H9.5A9.5 9.5 0 0 0 0 9.5z"/>
    <path d="M0 28.5A9.5 9.5 0 0 0 9.5 38H19V19H9.5A9.5 9.5 0 0 0 0 28.5z"/>
  </g>
  <path d="M337.5 272.5 L345 280 M345 272.5 L337.5 280" stroke="#858585" stroke-width="1.2"/>
  <path d="M370.3 270.7 V281.5 M365 276.1 H375.7" stroke="#8a8a8a" stroke-width="1.2"/>
</svg>
<div class="abs" style="left:257px;top:269.5px;font-size:12.6px;color:#f0f0f0;font-weight:bold;white-space:nowrap">Shadcn File</div>

<!-- Selection / card -->
<div id="sel" class="abs"></div>
<div class="abs handle" style="left:256px;top:347px"></div>
<div class="abs handle" style="left:773px;top:347px"></div>
<div class="abs handle" style="left:256px;top:1055px"></div>
<div class="abs handle" style="left:773px;top:1055px"></div>


<!-- card content -->
<div class="abs" style="left:296px;top:387px;font-size:20.6px;letter-spacing:0.4px;color:#f5f5f5;white-space:nowrap;-webkit-text-stroke:0.55px #f5f5f5">Payment Method</div>
<div class="abs" style="left:297px;top:419px;font-size:18.5px;letter-spacing:0.25px;color:#a1a1a1;white-space:nowrap">Add a new payment method to your account.</div>

<div class="abs opt on" style="left:296px;top:474px"></div>
<div class="abs opt" style="left:455px;top:474px"></div>
<div class="abs opt" style="left:615px;top:474px"></div>
<svg class="abs" style="left:355px;top:496px" width="21" height="17" viewBox="0 0 21 17"><rect x="1.8" y="2.6" width="17.2" height="11.8" rx="2" fill="none" stroke="#ededed" stroke-width="1.7"/><line x1="1.8" y1="6.9" x2="19" y2="6.9" stroke="#ededed" stroke-width="1.7"/></svg>
<svg class="abs" style="left:514px;top:492px" width="22" height="24" viewBox="0 0 22 24">
 <path d="M5.2 1.8 H12.6 C16.6 1.8 18.6 4.4 17.6 8.2 C16.8 11.6 14.4 13.4 10.6 13.4 H8.3 L7.2 20 C7 21.2 6.8 21.6 5.6 21.6 H3.8 C2.8 21.6 2.1 21 2.3 20 Z" fill="#f2f2f2"/>
 <path d="M18.6 6.4 C19.8 7.6 20.2 9.6 19.6 11.6 C18.8 14.6 16.6 16.2 13.2 16.2 H11.2 L10.4 21.2 C10.2 22.2 9.8 22.8 8.8 22.8 H7 L7.4 20.4 L8.4 14.6 H10.8 C14.8 14.6 17.4 12.6 18.2 9 C18.5 8 18.6 7.2 18.6 6.4 Z" fill="#f2f2f2"/>
</svg>
<svg class="abs" style="left:674px;top:492px" width="20" height="24" viewBox="0 0 20 24">
 <path d="M13.6 2.4 C13.8 3.8 13.2 5.2 12.3 6.1 C11.4 7.0 10.2 7.4 9.1 7.3 C8.9 6.1 9.5 4.8 10.4 3.9 C11.3 3.0 12.6 2.5 13.6 2.4 Z" fill="#f2f2f2"/>
 <path d="M9.6 8.6 C10.6 8.6 11.9 7.8 13.2 7.8 C14.0 7.8 16.2 8.0 17.5 10.0 C17.4 10.1 15.1 11.3 15.1 14.0 C15.1 17.2 17.9 18.2 18.0 18.3 C17.8 18.9 16.2 22.8 13.6 22.8 C12.4 22.8 11.9 22.0 10.3 22.0 C8.6 22.0 8.0 22.8 6.9 22.8 C4.8 22.8 1.6 18.8 1.6 14.4 C1.6 10.2 4.4 7.9 6.8 7.9 C8.1 7.9 8.8 8.6 9.6 8.6 Z" fill="#f2f2f2"/>
</svg>
<div class="abs lbl" style="left:296px;top:532px;width:139px;text-align:center">Card</div>
<div class="abs lbl" style="left:455px;top:532px;width:139px;text-align:center">Paypal</div>
<div class="abs lbl" style="left:615px;top:532px;width:139px;text-align:center">Apple</div>

<div class="abs lbl" style="left:296px;top:620px">Name</div>
<div class="abs inp" style="left:296px;top:650px"></div>
<div class="abs lbl" style="left:312px;top:662px;color:#9a9a9a">First Last</div>

<div class="abs lbl" style="left:296px;top:740px">Card number</div>
<div class="abs inp" style="left:296px;top:770px"></div>

<div class="abs lbl" style="left:296px;top:860px">Expires</div>
<div class="abs lbl" style="left:455px;top:860px">Year</div>
<div class="abs lbl" style="left:615px;top:860px">CVC</div>
<div class="abs inp" style="left:296px;top:890px;width:139px"></div>
<div class="abs inp" style="left:455px;top:890px;width:139px"></div>
<div class="abs inp" style="left:615px;top:890px;width:139px"></div>
<div class="abs lbl" style="left:312px;top:902px">Month</div>
<div class="abs lbl" style="left:471px;top:902px">Year</div>
<div class="abs lbl" style="left:630px;top:902px;color:#8f8f8f">CVC</div>
<svg class="abs" style="left:404px;top:905px" width="10" height="16" viewBox="0 0 10 16"><path d="M2 5.5 L5 2.5 L8 5.5 M2 10.5 L5 13.5 L8 10.5" fill="none" stroke="#a8a8a8" stroke-width="1.4" stroke-linecap="round" stroke-linejoin="round"/></svg>
<svg class="abs" style="left:564px;top:905px" width="10" height="16" viewBox="0 0 10 16"><path d="M2 5.5 L5 2.5 L8 5.5 M2 10.5 L5 13.5 L8 10.5" fill="none" stroke="#a8a8a8" stroke-width="1.4" stroke-linecap="round" stroke-linejoin="round"/></svg>

<div class="abs" style="left:296px;top:966px;width:458px;height:46px;background:#e11d48"></div>
<div class="abs lbl" style="left:296px;top:978px;width:458px;text-align:center;color:#fdf2f4">Continue</div>

<!-- logos -->
<div class="abs lbox" style="left:1117px;top:94px"></div>
<svg class="abs" style="left:1155.7px;top:111.6px" width="84" height="126" viewBox="0 0 38 57">
<path d="M19 28.5a9.5 9.5 0 1 1 19 0 9.5 9.5 0 0 1-19 0z" fill="#1abcfe"/>
<path d="M0 47.5A9.5 9.5 0 0 1 9.5 38H19v9.5a9.5 9.5 0 1 1-19 0z" fill="#0acf83"/>
<path d="M19 0v19h9.5a9.5 9.5 0 1 0 0-19H19z" fill="#ff7262"/>
<path d="M0 9.5A9.5 9.5 0 0 0 9.5 19H19V0H9.5A9.5 9.5 0 0 0 0 9.5z" fill="#f24e1e"/>
<path d="M0 28.5A9.5 9.5 0 0 0 9.5 38H19V19H9.5A9.5 9.5 0 0 0 0 28.5z" fill="#a259ff"/>
</svg>
<div class="abs" style="left:1326px;top:118px;width:112px;height:112px;background:#fff;border-radius:7px"></div>
<div class="abs lbox" style="left:1487px;top:94px"></div>
<svg class="abs" style="left:1280px;top:90px" width="380" height="170" viewBox="1280 90 380 170">
  <path d="M1347 134.8 L1416 134.8 Q1395 176 1347 177.8 Z" fill="#ff5d4d"/>
  <circle cx="1362" cy="198" r="15" fill="#fdd683"/>
  <line x1="1408" y1="171.5" x2="1395" y2="205" stroke="#3b5ef6" stroke-width="14" stroke-linecap="round"/>
  <line x1="1515.2" y1="211.4" x2="1604.6" y2="121.6" stroke="#fafafa" stroke-width="10.5" stroke-linecap="round"/>
  <line x1="1567.3" y1="220.9" x2="1614" y2="174.1" stroke="#fafafa" stroke-width="10.5" stroke-linecap="round"/>
  <path d="M1293.5 175 H1309 M1303.5 169.5 L1309 175 L1303.5 180.5" fill="none" stroke="#e8f5f1" stroke-width="1.6" stroke-linecap="round" stroke-linejoin="round"/>
  <path d="M1454.5 175 H1470 M1464.5 169.5 L1470 175 L1464.5 180.5" fill="none" stroke="#e8f5f1" stroke-width="1.6" stroke-linecap="round" stroke-linejoin="round"/>
</svg>

<!-- panel -->
<div id="panel" class="abs">
  <div id="phead" class="abs"></div>
  <div class="abs" style="left:11.5px;top:11px;width:19px;height:19px;border-radius:5px;background:#242424"></div>
  <svg class="abs" style="left:11.5px;top:11px" width="19" height="19" viewBox="0 0 19 19">
    <path d="M4.2 2.7 H15.5 Q13.5 9.5 4.4 10.8 Z" fill="#f7634f"/>
    <circle cx="6.8" cy="14.4" r="2.7" fill="#fde9a0"/>
    <line x1="14.7" y1="9.4" x2="12.6" y2="15.6" stroke="#4a63f0" stroke-width="3" stroke-linecap="round"/>
  </svg>
  <div class="abs" style="left:40px;top:13.5px;font-size:13.6px;font-weight:bold;color:#f2f2f2;letter-spacing:-0.6px">Anima</div>
  <svg class="abs" style="left:469px;top:14px" width="16" height="16" viewBox="0 0 16 16"><path d="M2 2 L14.6 14.3 M14.6 2 L2 14.3" stroke="#ededed" stroke-width="1.4"/></svg>

  <svg class="abs" style="left:21px;top:62px" width="13" height="13" viewBox="0 0 13 13"><path d="M1.5 11.5 L10 3 M6.5 11.5 L11.5 6.5" stroke="#d8d8d8" stroke-width="1.4" stroke-linecap="round"/></svg>
  <div class="abs" style="left:39.5px;top:60.5px;font-size:14.4px;color:#ececec;white-space:nowrap;-webkit-text-stroke:0.35px #ececec">Shadcn <span style="color:#8a8a8a;-webkit-text-stroke:0">jsx</span></div>
  <svg class="abs" style="left:121px;top:64px" width="11" height="9" viewBox="0 0 11 9"><path d="M2 2.5 L5.5 6 L9 2.5" fill="none" stroke="#9a9a9a" stroke-width="1.2"/></svg>

  <div class="abs" style="left:353px;top:52px;width:132px;height:32.5px;border:1.2px solid #474747;border-radius:8px;background:#141414"></div>
  <svg class="abs" style="left:366px;top:61px" width="17" height="15" viewBox="0 0 17 15"><rect x="1.8" y="2" width="13.6" height="11.6" rx="2" fill="none" stroke="#a8a8a8" stroke-width="1.3"/><path d="M1.8 8.2 H7.6 V13.6" fill="none" stroke="#a8a8a8" stroke-width="1.3"/></svg>
  <div class="abs" style="left:391.5px;top:62px;font-size:13.8px;font-weight:bold;color:#b9b9b9;white-space:nowrap">Breakpoints</div>

  <div class="abs" style="left:9px;top:94px;width:477px;height:603px;background:#1e1e1e;border-radius:8px 8px 0 0;overflow:hidden">
    <div class="abs" style="left:0;top:0;width:477px;height:46px;background:#212120"></div>
    <div class="abs" style="left:0;top:0;width:82px;height:46px;background:#1d1d1d"></div>
    <div class="abs" style="left:0;top:45px;width:82px;height:1px;background:#bdbdbd"></div>
    <div class="abs" style="left:11.5px;top:15.5px;font-size:13.8px;font-weight:bold;color:#f0f0f0;white-space:nowrap">index.jsx</div>
    <div id="code" class="abs" style="left:12px;top:61.7px;width:461px;height:539.8px;overflow:hidden"><span class="k">import</span> { Button } <span class="k">from</span> <span class="s">"@/components/ui/button"</span>;
<span class="k">import</span> {
  Card,
  CardContent,
  CardFooter,
  CardHeader,
} <span class="k">from</span> <span class="s">"@/components/ui/card"</span>;
<span class="k">import</span> { Input } <span class="k">from</span> <span class="s">"@/components/ui/input"</span>;
<span class="k">import</span> { Label } <span class="k">from</span> <span class="s">"@/components/ui/label"</span>;
<span class="k">import</span> {
  Select,
  SelectContent,
  SelectItem,
  SelectTrigger,
  SelectValue,
} <span class="k">from</span> <span class="s">"@/components/ui/select"</span>;
<span class="k">import</span> { Apple, CreditCard } <span class="k">from</span> <span class="s">"lucide-react"</span>;
<span class="k">import</span> React <span class="k">from</span> <span class="s">"react"</span>;

<span class="c">// Payment method options data</span>
<span class="k">const</span> <span class="b">paymentMethods</span> <span class="k">=</span> [
  { id: <span class="s">"card"</span>, icon: CreditCard, label: <span class="s">"Card"</span> },
  {
    id: <span class="s">"paypal"</span>,
    <span class="p">icon</span>: () <span class="k">=&gt;</span> (
      &lt;<span class="g">svg</span> <span class="p">className</span><span class="k">=</span><span class="s">"w-4 h-4"</span> <span class="p">viewBox</span><span class="k">=</span><span class="s">"0 0 24 24"</span> <span class="p">fill</span><span class="k">=</span><span class="s">"currentColor"&gt;</span>
        &lt;<span class="g">path</span> <span class="p">d</span><span class="k">=</span><span class="s">"M20.067 8.478c.492.315.844.825.983 1.46.545 2.2-.29 4.1"</span>
      &lt;/<span class="g">svg</span>&gt;
    ),
    label: <span class="s">"Paypal"</span>,
  },
  { id: <span class="s">"apple"</span>, icon: Apple, label: <span class="s">"Apple"</span> },
];

<span class="c">// Month options for expiration date</span>
<span class="k">const</span> <span class="b">months</span> <span class="k">=</span> <span class="b">Array</span>.<span class="p">from</span>({ length: <span class="b">12</span> }, (<span class="o">_</span>, <span class="o">i</span>) <span class="k">=&gt;</span> {
  <span class="k">const</span> <span class="b">month</span> <span class="k">=</span> (i <span class="k">+</span> <span class="b">1</span>).<span class="b">toString</span>().<span class="p">padStart</span>(<span class="b">2</span>, <span class="s">"0"</span>);
  <span class="k">return</span> { value: month, label: month };</div>
    <div class="abs" style="left:472px;top:46.8px;width:4.5px;height:118px;background:#121212;border-radius:2px"></div>
    <div class="abs" style="left:434px;top:55.2px;width:33px;height:33px;border:1.2px solid #3c3c3c;border-radius:7px;background:#1a1a1a"></div>
    <svg class="abs" style="left:442px;top:63px" width="17" height="17" viewBox="0 0 17 17"><path d="M3 10.5 V4 Q3 2.2 4.8 2.2 H10.6" fill="none" stroke="#bdbdbd" stroke-width="1.3"/><rect x="5.6" y="5" width="8.6" height="8.8" rx="1.8" fill="none" stroke="#bdbdbd" stroke-width="1.3"/></svg>
    <div class="abs" style="left:387.8px;top:538.9px;width:74px;height:51.6px;border-radius:9px;background:#262626"></div>
    <svg class="abs" style="left:396px;top:555px" width="18" height="18" viewBox="0 0 18 18"><path d="M7.5 3 Q8.2 8.6 13.2 9.4 Q8.2 10.2 7.5 15.6 Q6.8 10.2 1.8 9.4 Q6.8 8.6 7.5 3 Z" fill="none" stroke="#6d4ff2" stroke-width="1.5" stroke-linejoin="round"/><circle cx="14.2" cy="3.2" r="1.1" fill="#6d4ff2"/></svg>
    <div class="abs" style="left:417px;top:554px;width:35px;height:21.5px;border-radius:11px;background:#333131"></div>
    <div class="abs" style="left:421.2px;top:557.4px;width:14px;height:14px;border-radius:50%;background:#ffffff"></div>
  </div>
  <div class="abs" style="left:9px;top:693.6px;width:33px;height:4px;border-radius:2px;background:#0e0e0e"></div>
</div>

</body></html>
